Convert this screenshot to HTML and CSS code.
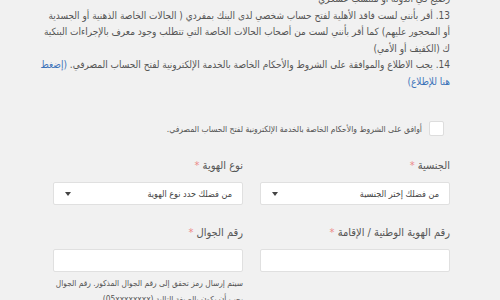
FILE: index.html
```html
<!DOCTYPE html>
<html lang="ar" dir="rtl">
<head>
    <meta charset="UTF-8">
    <meta name="viewport" content="width=device-width, initial-scale=1.0">
    <title>فتح حساب</title>
    <link rel="stylesheet" href="styles.css">
</head>
<body>
    <div class="container">
        <div class="terms">
            <p>رضيع في الدولة أو منتسب عسكري</p>
            <p>13. أقر بأنني لست فاقد الأهلية لفتح حساب شخصي لدى البنك بمفردي ( الحالات الخاصة الذهنية أو الجسدية<br>أو المحجور عليهم) كما أقر بأنني لست من أصحاب الحالات الخاصة التي تتطلب وجود معرف بالإجراءات البنكية<br>ك (الكفيف أو الأمي)</p>
            <p>14. يجب الاطلاع والموافقة على الشروط والأحكام الخاصة بالخدمة الإلكترونية لفتح الحساب المصرفي. <a href="#">(إضغط<br>هنا للإطلاع)</a></p>
        </div>

        <label class="agree">
            <span class="checkbox"></span>
            <span>أوافق على الشروط والأحكام الخاصة بالخدمة الإلكترونية لفتح الحساب المصرفي.</span>
        </label>

        <div class="form-grid">
            <div class="form-group">
                <label>الجنسية <span class="req">*</span></label>
                <div class="select">
                    <span>من فضلك إختر الجنسية</span>
                    <span class="arrow"></span>
                </div>
            </div>
            <div class="form-group">
                <label>نوع الهوية <span class="req">*</span></label>
                <div class="select">
                    <span>من فضلك حدد نوع الهوية</span>
                    <span class="arrow"></span>
                </div>
            </div>
            <div class="form-group">
                <label>رقم الهوية الوطنية / الإقامة <span class="req">*</span></label>
                <input type="text">
            </div>
            <div class="form-group">
                <label>رقم الجوال <span class="req">*</span></label>
                <input type="text">
                <p class="hint">سيتم إرسال رمز تحقق إلى رقم الجوال المذكور. رقم الجوال يجب أن يكون بالصيغة التالية (05xxxxxxxx)</p>
            </div>
        </div>
    </div>
</body>
</html>
```

FILE: styles.css
```css
body {
    margin: 0;
    padding: 0;
    background-color: #f1f1f1;
    font-family: "DejaVu Sans Condensed", "DejaVu Sans", sans-serif;
    font-stretch: condensed;
    color: #555;
    overflow: hidden;
}
.container {
    padding: 0 50px 0 57px;
}
.terms {
    margin-top: -9px;
    font-size: 10px;
    line-height: 16.5px;
    white-space: nowrap;
}
.terms p {
    margin: 0;
}
.terms a {
    color: #3b73b9;
    text-decoration: none;
}
.agree {
    display: flex;
    align-items: center;
    gap: 7px;
    margin-top: 31px;
    font-size: 8.5px;
    color: #555;
    white-space: nowrap;
}
.checkbox {
    width: 13px;
    height: 13px;
    margin-right: 6px;
    background: #fff;
    border: 1px solid #ddd;
    border-radius: 2px;
}
.form-grid {
    display: grid;
    grid-template-columns: minmax(0, 1fr) minmax(0, 1fr);
    column-gap: 17px;
    row-gap: 20px;
    margin-top: 22px;
    margin-left: -4px;
}
.form-group label {
    display: block;
    font-size: 11px;
    line-height: 16px;
    margin-bottom: 8px;
    color: #555;
}
.req {
    color: #ec8a8a;
}
.select, .form-group input {
    box-sizing: border-box;
    width: 100%;
    height: 23px;
    background: #fff;
    border: 1px solid #e0e0e0;
    border-radius: 2px;
}
.select {
    display: flex;
    align-items: center;
    justify-content: space-between;
    padding: 0 10px 0 11px;
    font-size: 9px;
    color: #444;
}
.arrow {
    width: 0;
    height: 0;
    border-left: 3.5px solid transparent;
    border-right: 3.5px solid transparent;
    border-top: 4px solid #444;
}
.form-group input {
    display: block;
    margin: 0;
    padding: 0;
    outline: none;
}
.hint {
    margin: 3px 0 0;
    font-size: 8.3px;
    line-height: 16px;
    color: #555;
}
```
